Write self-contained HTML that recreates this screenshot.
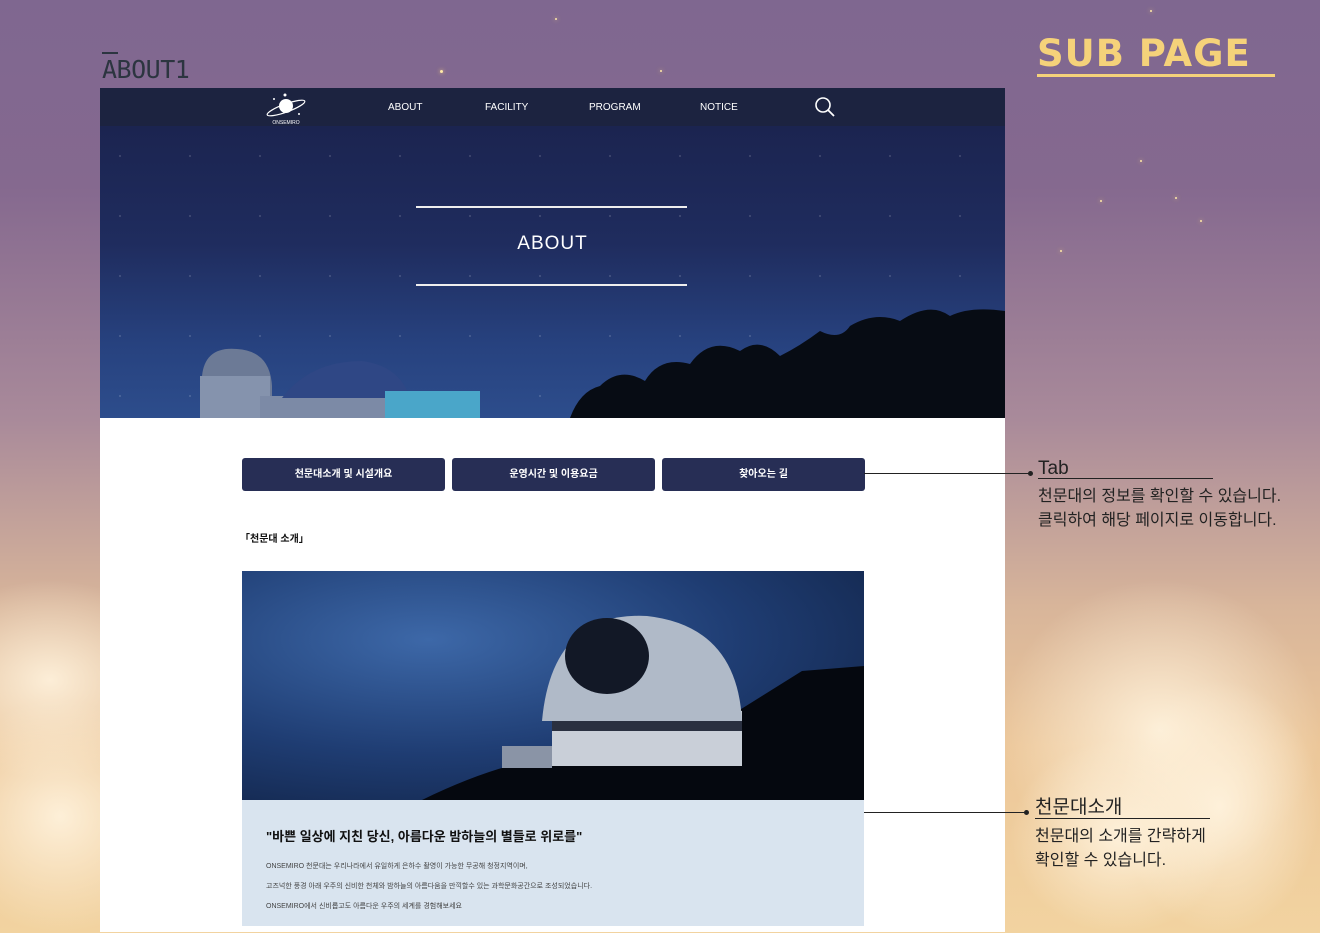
<!DOCTYPE html>
<html><head><meta charset="utf-8">
<style>
*{margin:0;padding:0;box-sizing:border-box}
html{width:1320px;height:933px;overflow:hidden;background:#85698f}
body{width:1320px;height:933px;overflow:hidden;position:relative;font-family:"Liberation Sans","Noto Sans CJK KR",sans-serif;
background:linear-gradient(180deg,#7f6790 0%,#85698f 20%,#a98a9a 45%,#d8b59a 65%,#ecc79a 80%,#f2d3a0 100%);}
.cloud{position:absolute;border-radius:50%;background:radial-gradient(closest-side,rgba(255,243,222,.9),rgba(255,235,205,0));}
.star{position:absolute;width:3px;height:3px;border-radius:50%;background:#ffe9a8;box-shadow:0 0 4px #ffd97a}
.t1{position:absolute;left:102px;top:55px;font-size:25px;color:#2c3540;letter-spacing:-0.5px;font-family:"DejaVu Sans Mono","Liberation Mono",monospace}
.t1:before{content:"";position:absolute;left:0;top:-3px;width:16px;height:2px;background:#2c3540}
.sub{position:absolute;left:1037px;top:32px;font-size:37px;font-weight:900;color:#f5d27a;letter-spacing:1px;font-family:"DejaVu Sans","Liberation Sans",sans-serif;white-space:nowrap}
.subline{position:absolute;left:1037px;top:74px;width:238px;height:3px;background:#f5d27a}
.page{position:absolute;left:100px;top:88px;width:905px;height:844px;background:#fff;overflow:hidden}
.nav{height:38px;background:#1c2340;position:relative;color:#fff;font-size:10px}
.nav span{position:absolute;top:14px}
.hero{height:292px;position:relative;overflow:hidden;background:linear-gradient(180deg,#1b2450 0%,#1f2c5e 40%,#27427f 75%,#2d4d8c 100%);}
.hero .l{position:absolute;left:316px;width:271px;height:2px;background:#eee}
.tab{position:absolute;top:370px;width:203px;height:33px;background:#272e55;border-radius:3px;color:#fff;font-size:10px;font-weight:bold;text-align:center;line-height:33px}
.ann{position:absolute;color:#222;font-size:16px;line-height:24px}
.ann b{font-weight:normal;font-size:19px}
.ln{position:absolute;height:1px;background:#222}
</style></head><body>
<div class="cloud" style="left:-80px;top:580px;width:260px;height:200px"></div>
<div class="cloud" style="left:-60px;top:700px;width:240px;height:233px"></div>
<div class="cloud" style="left:1000px;top:580px;width:320px;height:300px"></div>
<div class="cloud" style="left:1120px;top:680px;width:200px;height:253px"></div>
<div class="cloud" style="left:1010px;top:740px;width:220px;height:193px"></div>
<div class="star" style="left:440px;top:70px"></div>
<div class="star" style="left:555px;top:18px;width:2px;height:2px"></div><div class="star" style="left:1150px;top:10px;width:2px;height:2px"></div>
<div class="star" style="left:1140px;top:160px;width:2px;height:2px"></div><div class="star" style="left:1200px;top:220px;width:2px;height:2px"></div>
<div class="star" style="left:1175px;top:197px;width:2px;height:2px"></div><div class="star" style="left:1100px;top:200px;width:2px;height:2px"></div>
<div class="star" style="left:660px;top:70px;width:2px;height:2px"></div><div class="star" style="left:1060px;top:250px;width:2px;height:2px"></div>
<div class="t1">ABOUT1</div>
<div class="sub">SUB PAGE</div><div class="subline"></div>
<div class="page">
 <div class="nav">
  <svg style="position:absolute;left:164px;top:5px" width="45" height="32" viewBox="0 0 45 32"><circle cx="22" cy="13" r="7" fill="#fff"/><ellipse cx="22" cy="15" rx="20" ry="4" fill="none" stroke="#fff" stroke-width="1.2" transform="rotate(-20 22 15)"/><circle cx="10" cy="6" r="1" fill="#fff"/><circle cx="21" cy="2" r="1.5" fill="#fff"/><circle cx="35" cy="21" r="1" fill="#fff"/><text x="22" y="31" font-size="5" fill="#fff" text-anchor="middle">ONSEMIRO</text></svg>
  <span style="left:288px">ABOUT</span><span style="left:385px">FACILITY</span><span style="left:489px">PROGRAM</span><span style="left:600px">NOTICE</span>
  <svg style="position:absolute;left:714px;top:8px" width="22" height="22" viewBox="0 0 22 22"><circle cx="9" cy="9" r="7" fill="none" stroke="#fff" stroke-width="1.6"/><path d="M14 14 L20 20" stroke="#fff" stroke-width="1.8"/></svg>
 </div>
 <div class="hero">
  <div style="position:absolute;inset:0;background-image:radial-gradient(1px 1px at 20px 30px,#fff,transparent),radial-gradient(1px 1px at 80px 90px,#cfd8ff,transparent),radial-gradient(1px 1px at 140px 50px,#fff,transparent),radial-gradient(1px 1px at 50px 110px,#fff,transparent);background-size:70px 60px;opacity:.5"></div>
  <div class="l" style="top:80px"></div>
  <div style="position:absolute;left:0;width:905px;top:107px;text-align:center;color:#fff;font-size:19px;letter-spacing:1px">ABOUT</div>
  <div class="l" style="top:158px"></div>
  <svg style="position:absolute;left:0;top:180px" width="905" height="112" viewBox="0 0 905 112">
   <path d="M102 112 V70 Q105 40 137 43 Q170 45 172 80 V112Z" fill="#6c7a96"/>
   <rect x="100" y="70" width="70" height="42" fill="#8593ad"/>
   <rect x="160" y="90" width="220" height="22" fill="#7c8aa6"/>
   <path d="M182 92 Q210 55 262 55 Q300 60 310 92Z" fill="#2f4785"/>
   <rect x="285" y="85" width="95" height="27" fill="#4aa6c9"/>
   <path d="M470 112 Q480 85 500 80 Q520 60 545 75 Q560 50 590 58 Q610 30 640 45 Q660 30 680 50 Q700 40 720 25 Q740 35 750 20 Q775 5 800 15 Q830 -5 850 10 Q870 0 905 5 V112Z" fill="#070c14"/>
  </svg>
 </div>
 <div class="tab" style="left:142px">천문대소개 및 시설개요</div>
 <div class="tab" style="left:352px">운영시간 및 이용요금</div>
 <div class="tab" style="left:562px">찾아오는 길</div>
 <div style="position:absolute;left:140px;top:442px;font-size:10px;font-weight:bold;color:#111">「천문대 소개」</div>
 <div style="position:absolute;left:142px;top:483px;width:622px;height:229px;background:radial-gradient(ellipse at 30% 30%,#3d68a8 0%,#1f3d73 50%,#0e1d3c 100%);overflow:hidden">
  <svg width="622" height="229" viewBox="0 0 622 229"><path d="M180 229 Q260 190 320 185 L480 150 L560 100 L622 95 V229Z" fill="#05080f"/><rect x="310" y="140" width="190" height="55" fill="#c9cfd8"/><rect x="310" y="150" width="190" height="10" fill="#2a3040"/><path d="M300 150 Q310 40 405 45 Q495 55 500 150Z" fill="#b0bac8"/><ellipse cx="365" cy="85" rx="42" ry="38" fill="#121826"/><rect x="260" y="175" width="50" height="22" fill="#8a94a6"/></svg>
 </div>
 <div style="position:absolute;left:142px;top:712px;width:622px;height:126px;background:#d9e4ef">
  <div style="position:absolute;left:24px;top:26px;font-size:13px;font-weight:bold;color:#111">"바쁜 일상에 지친 당신, 아름다운 밤하늘의 별들로 위로를"</div>
  <div style="position:absolute;left:24px;top:57px;font-size:7px;color:#444;line-height:20px">ONSEMIRO 천문대는 우리나라에서 유일하게 은하수 촬영이 가능한 무공해 청정지역이며,<br>고즈넉한 풍경 아래 우주의 신비한 천체와 밤하늘의 아름다움을 만끽할수 있는 과학문화공간으로 조성되었습니다.<br>ONSEMIRO에서 신비롭고도 아름다운 우주의 세계를 경험해보세요</div>
 </div>
</div>
<div class="ln" style="left:864px;top:473px;width:166px"></div><div style="position:absolute;left:1028px;top:471px;width:5px;height:5px;border-radius:50%;background:#222"></div>
<div class="ann" style="left:1038px;top:457px"><b>Tab</b></div><div class="ln" style="left:1038px;top:478px;width:175px"></div>
<div class="ann" style="left:1038px;top:485px">천문대의 정보를 확인할 수 있습니다.<br>클릭하여 해당 페이지로 이동합니다.</div>
<div class="ln" style="left:864px;top:812px;width:162px"></div><div style="position:absolute;left:1024px;top:810px;width:5px;height:5px;border-radius:50%;background:#222"></div>
<div class="ann" style="left:1035px;top:796px"><b>천문대소개</b></div><div class="ln" style="left:1035px;top:818px;width:175px"></div>
<div class="ann" style="left:1035px;top:825px">천문대의 소개를 간략하게<br>확인할 수 있습니다.</div>
</body></html>
